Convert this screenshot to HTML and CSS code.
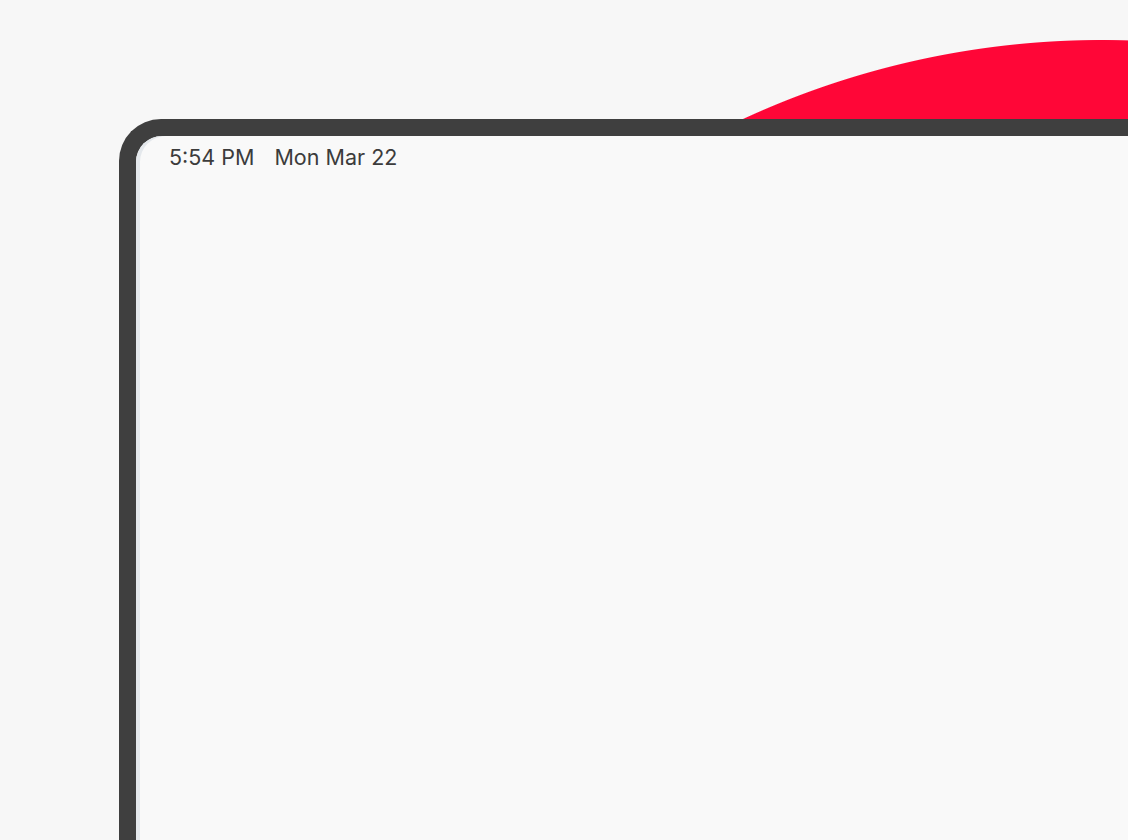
FILE: index.html
```html
<!DOCTYPE html>
<html lang="en">
<head>
<meta charset="utf-8">
<title>Device</title>
<link rel="stylesheet" href="styles.css">
</head>
<body>
<div class="device">
  <div class="screen">
    <div class="status-bar">
      <span class="time">5:54 PM</span>
      <span class="date">Mon Mar 22</span>
    </div>
  </div>
</div>
</body>
</html>
```
FILE: styles.css
```css
html, body {
  margin: 0;
  padding: 0;
  width: 1128px;
  height: 840px;
  overflow: hidden;
}
body {
  position: relative;
  font-family: Inter, "Noto Sans", sans-serif;
  background:
    radial-gradient(circle 855px at 1102px 895px, #ff0637 854.5px, rgba(255, 6, 55, 0) 855.5px),
    #f7f7f7;
}
.device {
  position: absolute;
  left: 119px;
  top: 119px;
  right: 0;
  bottom: 0;
  border-top: 17px solid #3f3f3f;
  border-left: 17px solid #3f3f3f;
  border-radius: 42px 0 0 0;
  background: #3f3f3f;
}
.screen {
  height: 100%;
  background: #f9f9f9;
  border-radius: 26px 0 0 0;
  box-shadow: inset 4px 0 0 #e4e8ec;
}
.status-bar {
  display: flex;
  gap: 20px;
  padding: 9px 0 0 33px;
  font-size: 21.5px;
  line-height: 25px;
  color: #3c3c3c;
}
```
